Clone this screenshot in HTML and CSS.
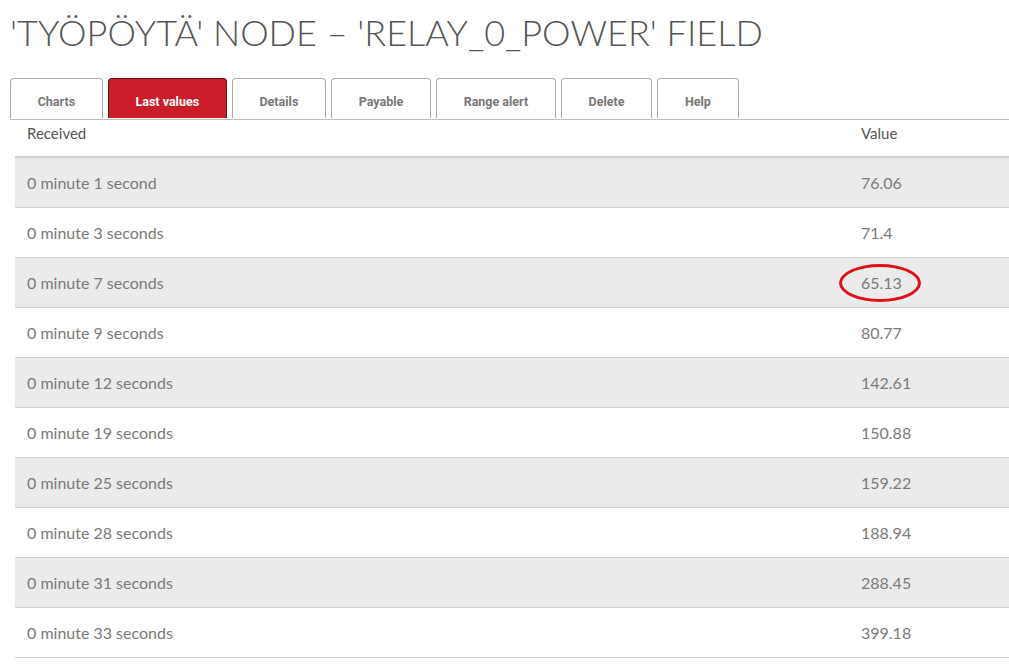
FILE: index.html
```html
<!DOCTYPE html>
<html lang="en">
<head>
  <meta charset="UTF-8">
  <title>Last values</title>
  <link rel="stylesheet" href="styles.css">
</head>
<body>
  <h1 class="pageTitle">'Työpöytä' node – 'relay_0_power' field</h1>

  <div class="tabs">
    <div class="tab">Charts</div>
    <div class="tab active">Last values</div>
    <div class="tab">Details</div>
    <div class="tab">Payable</div>
    <div class="tab">Range alert</div>
    <div class="tab">Delete</div>
    <div class="tab">Help</div>
  </div>

  <table class="values">
    <thead>
      <tr><th>Received</th><th class="valCol">Value</th></tr>
    </thead>
    <tbody>
      <tr><td>0 minute 1 second</td><td>76.06</td></tr>
      <tr><td>0 minute 3 seconds</td><td>71.4</td></tr>
      <tr><td>0 minute 7 seconds</td><td><span class="circled">65.13</span></td></tr>
      <tr><td>0 minute 9 seconds</td><td>80.77</td></tr>
      <tr><td>0 minute 12 seconds</td><td>142.61</td></tr>
      <tr><td>0 minute 19 seconds</td><td>150.88</td></tr>
      <tr><td>0 minute 25 seconds</td><td>159.22</td></tr>
      <tr><td>0 minute 28 seconds</td><td>188.94</td></tr>
      <tr><td>0 minute 31 seconds</td><td>288.45</td></tr>
      <tr><td>0 minute 33 seconds</td><td>399.18</td></tr>
    </tbody>
  </table>
</body>
</html>
```

FILE: styles.css
```css
body {
  margin: 0;
  padding: 0 0 0 10px;
  font-family: 'Lato', 'Open Sans', sans-serif;
  background: #ffffff;
  color: #666;
}

.pageTitle {
  margin: 12px 0 0 0;
  height: 40px;
  line-height: 40px;
  font-size: 36px;
  font-weight: 300;
  text-transform: uppercase;
  color: #555;
  letter-spacing: 0;
}

.tabs {
  display: flex;
  gap: 5px;
  margin-top: 26px;
  border-bottom: 1px solid #bdbdbd;
  height: 41px;
}

.tab {
  display: flex;
  align-items: center;
  justify-content: center;
  height: 40px;
  box-sizing: border-box;
  padding: 6px 26.7px 0 26.7px;
  border: 1px solid #aaa;
  border-bottom: none;
  border-radius: 4px 4px 0 0;
  font-family: 'Roboto', sans-serif;
  font-weight: bold;
  font-size: 12.5px;
  color: #777;
  background: #fff;
}

.tab.active {
  background: #cc1d2b;
  color: #fff;
  border-color: #5a1a1a;
}

.values {
  margin-left: 5px;
  width: calc(100% - 5px);
  border-collapse: collapse;
}

.values th {
  text-align: left;
  font-weight: normal;
  font-size: 15px;
  color: #555;
  height: 32px;
  padding: 4px 12px 0 12px;
  vertical-align: top;
  border-bottom: 2px solid #cfcfcf;
}

.values th.valCol {
  width: 136px;
}

.values td {
  height: 49px;
  padding: 0 12px;
  font-size: 16px;
  color: #7a7a7a;
  border-bottom: 1px solid #cfcfcf;
}

.values tbody tr:nth-child(odd) td {
  background: #ebebeb;
}

.circled {
  position: relative;
}

.circled::after {
  content: '';
  position: absolute;
  left: -22px;
  top: -9px;
  width: 76px;
  height: 32px;
  border: 3px solid #e0101a;
  border-radius: 50%;
}
```
